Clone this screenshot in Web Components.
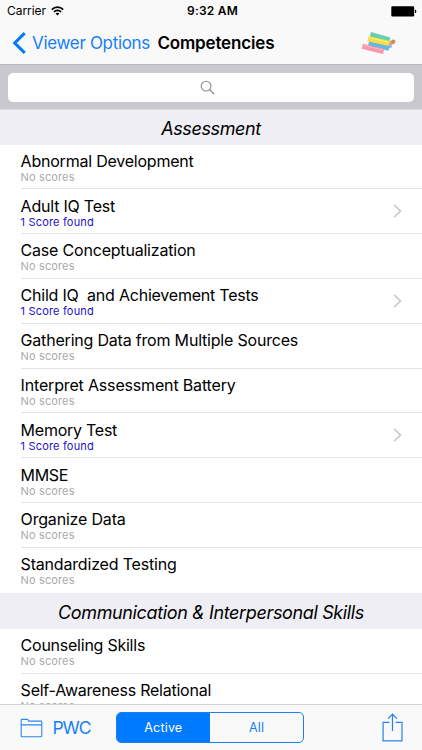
<!DOCTYPE html>
<html lang="en">
<head>
<meta charset="utf-8">
<title>Competencies</title>
<style>
  body { margin: 0; }
</style>
</head>
<body>
<competency-app></competency-app>
<script>
const make = (name, html, init) => customElements.define(name, class extends HTMLElement {
  constructor() {
    super();
    this.attachShadow({ mode: 'open' }).innerHTML = html.trim();
  }
  connectedCallback() { if (init) init.call(this, this.shadowRoot); }
});

/* Single-line label whose tracking is adjusted to the width given in its "w" attribute. */
make('fit-text', `
  <style>:host{display:block;width:max-content;flex:none}span{white-space:pre}</style><span><slot></slot></span>`,
  function (root) {
    const w = parseFloat(this.getAttribute('w'));
    if (!w) return;
    const n = this.textContent.length;
    const span = root.querySelector('span');
    const natural = span.getBoundingClientRect().width;
    span.style.letterSpacing = ((w - natural) / n).toFixed(4) + 'px';
  });

make('status-bar', `
  <style>
    :host{display:grid;grid-template-columns:1fr auto 1fr;align-items:center;height:22px;padding:0 5px 0 7px;font-size:12px;line-height:22px}
    .l{display:flex;align-items:center;gap:5px}
    .t{font-weight:600;padding-left:1px}
    .b{justify-self:end;display:block}
  </style>
  <div class="l"><fit-text w="39">Carrier</fit-text>
    <svg width="13" height="10" viewBox="0 0 13 10" fill="none" stroke="#000" stroke-width="1.6"><path d="M.8 3.6C4 .3 9 .3 12.2 3.6M2.9 5.9C5 3.8 8 3.8 10.1 5.9"/><path d="M6.5 9.4L4.6 7.5Q6.5 5.9 8.4 7.5Z" fill="#000" stroke="none"/></svg>
  </div>
  <fit-text class="t" w="51">9:32 AM</fit-text>
  <svg class="b" width="26" height="11" viewBox="0 0 26 11"><rect x="0.3" y=".3" width="22.9" height="10.2" rx="1.3"/><path d="M24 3.7h.4q.9.4.9 1.7t-.9 1.7H24z"/></svg>`);

make('nav-bar', `
  <style>
    :host{display:flex;align-items:center;height:43px;padding:0 25px 0 12px;font-size:17px;line-height:43px;border-bottom:1px solid #b9b9be;box-sizing:border-box}
    .back{display:flex;align-items:center;color:#177efb;gap:6px}
    .title{font-weight:600;margin-left:7.4px}
    .chalk{margin-left:auto}
    svg{display:block}
  </style>
  <div class="back"><svg width="14" height="22" viewBox="0 0 14 22" fill="none" stroke="#007aff" stroke-width="3"><path d="M12.7 1.1L2.7 11L12.7 20.9"/></svg><fit-text w="118">Viewer Options</fit-text></div>
  <fit-text class="title" w="117">Competencies</fit-text>
  <svg class="chalk" width="36" height="24" viewBox="0 0 36 24">
    <g transform="translate(.7 .9)" fill="none">
      <path d="M26.5 12.3L31.8 10" stroke="#d3a06e" stroke-width="4"/>
      <path d="M24 15L29.8 13.2" stroke="#b3a8d6" stroke-width="4.4"/>
      <path d="M8.6 2.7L28 8.2" stroke="#66d0b5" stroke-width="5.2"/>
      <path d="M7 10.9L27.4 16.2" stroke="#62b7e7" stroke-width="5.6"/>
      <path d="M6.3 6.7L27.5 11.6" stroke="#f5df45" stroke-width="5.2"/>
      <path d="M6.8 5.6L27.6 10.4" stroke="#fff07b" stroke-width="1"/>
      <path d="M.6 14.4L22 19.6" stroke="#f994a9" stroke-width="5"/>
      <path d="M1 13.3L22.2 18.4" stroke="#ffb7c0" stroke-width="1"/>
      <ellipse cx="31.6" cy="9.7" rx="2" ry="2.2" fill="#d08a4c"/>
    </g>
  </svg>`);

make('search-bar', `
  <style>
    :host{display:flex;height:45px;box-sizing:border-box;padding:8px 8.5px 7.5px 8px;background:#c9c8cf;border-bottom:1px solid #dcdbe1}
    .field{flex:1;background:#fff;border-radius:5px;display:flex;align-items:center;justify-content:center}
  </style>
  <div class="field"><svg width="15" height="15" viewBox="0 0 15 15" fill="none" stroke="#8e8e93" stroke-width="1.15" style="margin-right:7.5px"><circle cx="6.1" cy="6.1" r="4.9"/><path d="M9.7 9.7L14 14" stroke-width="1.4"/></svg></div>`);

make('section-header', `
  <style>
    :host{display:flex;align-items:center;justify-content:center;height:var(--h,36px);flex:none;box-sizing:border-box;background:#efeef4;font-size:18px;font-style:italic;line-height:22px;padding-top:var(--pt,2px)}
  </style><slot></slot>`);

make('score-row', `
  <style>
    :host{display:flex;flex:none;box-sizing:border-box;height:44.83px;padding-left:20.6px;background:#fff}
    :host([first]){height:44.33px}
    .in{flex:1;display:flex;align-items:center;justify-content:space-between;border-bottom:1px solid #e4e3e7;padding-right:20.5px}
    :host([last]) .in{border-color:transparent}
    .t{font-size:16px;line-height:20px;color:#000}
    .s{font-size:11px;line-height:13px;color:#aaa}
    :host([found]) .s{color:#1d12c9}
    .txt{padding-top:1.7px}
    svg{display:none}
    :host([found]) svg{display:block}
  </style>
  <div class="in"><div class="txt"><fit-text class="t"></fit-text><fit-text class="s"></fit-text></div>
  <svg width="9" height="14" viewBox="0 0 9 14" fill="none" stroke="#c7c7cc" stroke-width="1.7"><path d="M1.2 1L7.4 7L1.2 13"/></svg></div>`,
  function (root) {
    const found = this.hasAttribute('found');
    const put = (old, text, w) => {
      const el = document.createElement('fit-text');
      el.className = old.className;
      el.textContent = text;
      el.setAttribute('w', w);
      old.replaceWith(el);
    };
    put(root.querySelector('.t'), this.getAttribute('label'), this.getAttribute('w'));
    put(root.querySelector('.s'), found ? '1 Score found' : 'No scores', found ? 73.3 : 54);
  });

make('tool-bar', `
  <style>
    :host{display:flex;align-items:center;height:46px;box-sizing:border-box;border-top:1px solid #d3d3d6;background:#f9f9f9;padding:0 19.5px 0 20px;color:#177efb}
    svg{display:block;flex:none}
    .p{font-size:17.5px;margin-left:9.4px;line-height:24px}
    .seg{display:flex;width:188.5px;height:31px;box-sizing:border-box;border:1px solid #1b80ee;border-radius:5px;overflow:hidden;margin-left:25.3px;font-size:12.5px;line-height:29px}
    .seg div{flex:1;display:flex;justify-content:center}
    .seg .on{background:#007aff;color:#fff}
    .share{margin-left:auto}
  </style>
  <svg width="23" height="20" viewBox="0 0 23 20" fill="none" stroke="#2c86ec" stroke-width="1.1"><path d="M1.2 18.6V2.2q0-.8.8-.8h5.2q.7 0 1 .6l.6 1.1h12.2q.8 0 .8.8v14q0 .8-.8.8H2q-.8 0-.8-.8zM1.2 6.9h20.6"/></svg>
  <fit-text class="p" w="38">PWC</fit-text>
  <div class="seg"><div class="on"><fit-text w="38">Active</fit-text></div><div><fit-text w="15">All</fit-text></div></div>
  <svg class="share" width="21" height="29" viewBox="0 0 21 29" fill="none" stroke="#2582ee" stroke-width="1.2"><path d="M7.4 9.3H1.1V27.8H20V9.3H13.6M10.5 18V1.4M6.1 5.6L10.5 1.2L14.9 5.6"/></svg>`);

make('competency-app', `
  <style>
    :host{display:flex;flex-direction:column;width:422px;height:750px;overflow:hidden;background:#f9f9f9;color:#000;font-family:Inter,"Liberation Sans",sans-serif}
    .list{flex:1;min-height:0;overflow:hidden;display:flex;flex-direction:column;background:#fff}
  </style>
  <status-bar></status-bar>
  <nav-bar></nav-bar>
  <search-bar></search-bar>
  <div class="list">
    <section-header style="--h:35px;--pt:3px"><fit-text w="99.5">Assessment</fit-text></section-header>
    <score-row label="Abnormal Development" w="173" first></score-row>
    <score-row label="Adult IQ Test" w="94.5" found></score-row>
    <score-row label="Case Conceptualization" w="175"></score-row>
    <score-row label="Child IQ  and Achievement Tests" w="238" found></score-row>
    <score-row label="Gathering Data from Multiple Sources" w="277.5"></score-row>
    <score-row label="Interpret Assessment Battery" w="215"></score-row>
    <score-row label="Memory Test" w="96.5" found></score-row>
    <score-row label="MMSE" w="47.5"></score-row>
    <score-row label="Organize Data" w="105"></score-row>
    <score-row label="Standardized Testing" w="156" last></score-row>
    <section-header style="--h:36.5px;--pt:3px"><fit-text w="306">Communication &amp; Interpersonal Skills</fit-text></section-header>
    <score-row label="Counseling Skills" w="124.5" first></score-row>
    <score-row label="Self-Awareness Relational" w="190.5"></score-row>
  </div>
  <tool-bar></tool-bar>`);
</script>
</body>
</html>
